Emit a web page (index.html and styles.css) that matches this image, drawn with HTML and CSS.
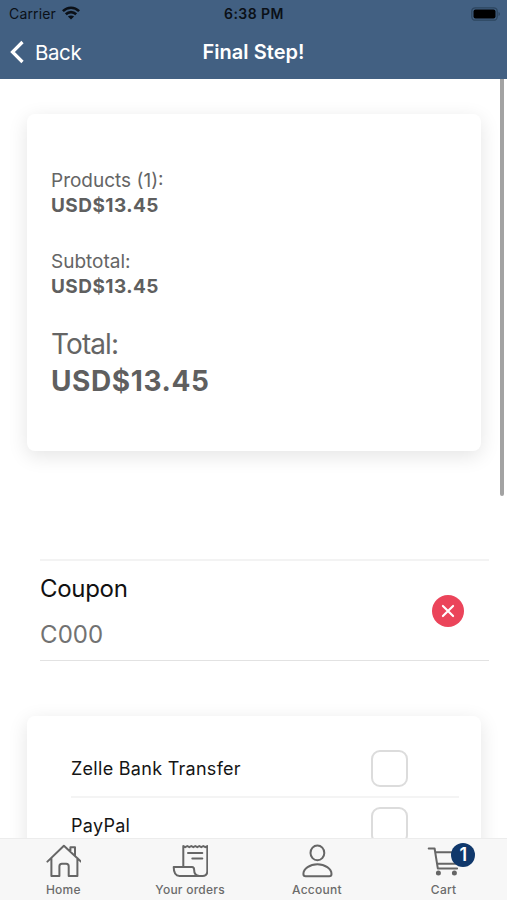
FILE: index.html
```html
<!DOCTYPE html>
<html lang="en">
<head>
<meta charset="utf-8">
<title>Final Step!</title>
<link rel="stylesheet" href="styles.css">
</head>
<body>
<div class="app">
  <header class="header">
    <div class="status">
      <div class="carrier"><span>Carrier</span>
        <svg width="18" height="14" viewBox="0 0 18 14" fill="none" stroke="#0b1017" stroke-width="2.6"><path d="M.9 5.2C5.5.6 12.500.6 17.100 5.200M3.800 8.300c3-2.900 7.400-2.900 10.400 0"/><path d="M5.900 10.500 9 13.600l3.100-3.100c-1.700-1.500-4.500-1.500-6.200 0z" fill="#0b1017" stroke="none"/></svg>
      </div>
      <span class="clock">6:38 PM</span>
      <svg class="battery" width="30" height="14" viewBox="0 0 30 14"><rect x=".8" y=".8" width="25.400" height="12.400" rx="3.500" fill="none" stroke="#2d455f" stroke-width="1.300"/><rect x="2.500" y="2.500" width="22" height="9" rx="2" fill="#000"/><path d="M27.500 5v4q1.500-.5 1.500-2t-1.500-2" fill="#2d455f"/></svg>
    </div>
    <nav class="navbar">
      <div class="back">
        <svg width="16" height="24" viewBox="0 0 16 24" fill="none" stroke="#fff" stroke-width="3.200"><path d="M13.500 2 3.500 12l10 10"/></svg>
        <span>Back</span>
      </div>
      <h1 class="title">Final Step!</h1>
      <span></span>
    </nav>
  </header>

  <main class="content">
    <section class="card summary">
      <div class="row"><span class="label">Products (1):</span><strong>USD$13.45</strong></div>
      <div class="row"><span class="label">Subtotal:</span><strong>USD$13.45</strong></div>
      <div class="row total"><span class="label">Total:</span><strong>USD$13.45</strong></div>
    </section>

    <section class="coupon">
      <div class="coupon-text"><span class="coupon-label">Coupon</span><span class="coupon-code">C000</span></div>
      <svg width="32" height="32" viewBox="0 0 32 32"><circle cx="16" cy="16" r="16" fill="#eb445a"/><path d="m10.900 10.900 10.200 10.200m0-10.200L10.900 21.100" stroke="#fff" stroke-width="2.100" stroke-linecap="round"/></svg>
    </section>

    <section class="card methods">
      <div class="method"><span>Zelle Bank Transfer</span><i class="check"></i></div>
      <div class="method"><span>PayPal</span><i class="check"></i></div>
    </section>
    <div class="scrollbar"></div>
  </main>

  <footer class="tabs">
    <div class="tab">
      <svg class="icon" viewBox="0 0 36 36"><path d="M2.400 18.600 18.900 2.700l17 15.900M6.400 15v17.900h8v-9.700q0-2.500 2.500-2.500h4.300q2.500 0 2.500 2.500v9.700h8.700V15M25.400 8V4.200h4.600v8.600"/></svg>
      <span>Home</span>
    </div>
    <div class="tab">
      <svg class="icon" viewBox="0 0 36 36"><path d="M11.300 24V3l2 1.200 2-1.200 2 1.200 2-1.200 2 1.200 2-1.200 2 1.200 2-1.200 2 1.200 2-1.200 2 1.200 2-1.200v25.200q0 4.700-4.700 4.700H7.500c-4 0-5.800-3.500-5.800-8.900H20c1.500 0 2.100.8 2.100 2.600 0 3.900 2.100 6.300 5.300 6.300M16 10.100h14.300M20.300 15.400h10"/></svg>
      <span>Your orders</span>
    </div>
    <div class="tab">
      <svg class="icon" viewBox="0 0 36 36"><ellipse cx="18.400" cy="9.900" rx="6.900" ry="7.400"/><path d="M18.400 21.300c-7.500 0-14 4.300-14 9.600 0 1.700.8 2.300 2.300 2.300h23.500c1.500 0 2.300-.6 2.300-2.300 0-5.300-6.600-9.600-14.100-9.600z"/></svg>
      <span>Account</span>
    </div>
    <div class="tab">
      <svg class="icon" viewBox="0 0 36 36"><path d="M2.700 5.500h5.900l3.200 19.900h19.300M9.400 9.200h24.100l-2.900 11.500H11"/><g class="wheels"><circle cx="12.400" cy="30" r="1.500"/><circle cx="28.400" cy="30" r="1.500"/></g></svg>
      <span>Cart</span>
      <b class="badge">1</b>
    </div>
  </footer>
</div>
</body>
</html>
```

FILE: styles.css
```css
* { box-sizing: border-box; }
body { margin: 0; font-family: Inter, "Liberation Sans", sans-serif; background: #fff; }
.app { width: 507px; height: 900px; overflow: hidden; display: flex; flex-direction: column; }

.header { height: 79px; flex: none; background: #426082; }
.status { height: 27px; padding: 0 6px 0 9px; display: grid; grid-template-columns: 1fr auto 1fr; align-items: center; font-size: 14px; line-height: 27px; color: #0b1017; }
.carrier { display: flex; align-items: center; gap: 6px; letter-spacing: .15px; }
.carrier svg { margin-top: -1px; }
.clock { font-weight: 600; letter-spacing: .45px; margin-right: 2px; }
.battery { justify-self: end; }
.navbar { height: 50px; padding: 0 9px; display: grid; grid-template-columns: 1fr auto 1fr; align-items: center; color: #fff; }
.back { display: flex; align-items: center; gap: 10px; font-size: 20.500px; letter-spacing: -.4px; }
.title { margin: 0; font-size: 20px; font-weight: 600; letter-spacing: .05px; }

.content { position: relative; flex: 1; min-height: 0; overflow: hidden; padding: 35px 18px 0 27px; }
.card { width: 454px; background: #fff; border-radius: 8px; box-shadow: 0 5px 20px rgba(0, 0, 0, .11); }
.summary { height: 337px; padding: 54px 24px 0; color: #656565; }
.row { display: flex; flex-direction: column; margin-bottom: 30px; font-size: 19px; line-height: 25.300px; }
.row strong { font-weight: 650; letter-spacing: .45px; color: #5f5f5f; }
.row.total { margin-top: -3px; font-size: 28px; line-height: 36.500px; }
.total .label { letter-spacing: -.9px; }
.total strong { letter-spacing: .6px; }

.coupon { height: 102px; margin: 108px 0 0 13px; width: 449px; border-top: 2px solid #f3f3f3; border-bottom: 1px solid #e2e2e2; display: flex; align-items: center; justify-content: space-between; padding-right: 25px; }
.coupon-text { display: flex; flex-direction: column; gap: 16px; padding-top: 2px; font-size: 24px; line-height: 30px; }
.coupon-label { color: #111; letter-spacing: -.3px; }
.coupon-code { color: #727272; letter-spacing: .1px; }

.methods { height: 300px; margin-top: 55px; padding: 25px 22px 0 44px; }
.method { height: 57px; display: flex; align-items: center; justify-content: space-between; padding-right: 51px; border-bottom: 2px solid #f4f4f4; font-size: 18px; letter-spacing: .28px; color: #151515; }
.check { width: 37px; height: 37px; border: 2px solid #dcdcdc; border-radius: 9px; }
.scrollbar { position: absolute; right: 3px; top: 0; width: 4px; height: 417px; border-radius: 0 0 2px 2px; background: #a3a3a3; }

.tabs { height: 62px; flex: none; display: grid; grid-template-columns: repeat(4, 1fr); background: #f7f7f7; border-top: 1px solid #ececec; color: #6b6b6b; }
.tab { position: relative; display: flex; flex-direction: column; align-items: center; padding-top: 4px; font-size: 12px; line-height: 16px; font-weight: 500; letter-spacing: .25px; }
.icon { width: 36px; height: 36px; fill: none; stroke: #666; stroke-width: 2; stroke-linejoin: round; stroke-linecap: round; margin-bottom: 3px; }
.wheels { fill: #666; }
.badge { position: absolute; top: 4px; left: 71px; width: 24px; height: 24px; border-radius: 50%; background: #10386b; color: #fff; text-align: center; font-size: 18px; line-height: 23px; font-weight: 600; letter-spacing: 0; }
```
